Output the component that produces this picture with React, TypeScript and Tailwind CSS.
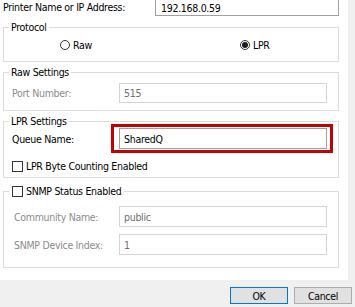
import React from "react";

function Radio({ checked }: { checked?: boolean }) {
  return (
    <span className="w-[10px] h-[10px] rounded-full border border-[#333333] bg-white flex items-center justify-center shrink-0">
      {checked && <span className="w-[6px] h-[6px] rounded-full bg-[#1a1a1a]" />}
    </span>
  );
}

function Check() {
  return <span className="w-[11px] h-[11px] border border-[#333333] bg-white shrink-0" />;
}

function Group({
  label,
  className,
  children,
}: {
  label: React.ReactNode;
  className: string;
  children?: React.ReactNode;
}) {
  return (
    <div className={`relative ml-[3px] w-[336px] border border-[#dcdcdc] ${className}`}>
      <div className="absolute -top-[9px] left-[5px] bg-white px-[2px] leading-[16px] flex items-center">{label}</div>
      {children}
    </div>
  );
}

export default function App() {
  return (
    <div className="w-[355px] h-[307px] bg-[#f0f0f0] flex flex-col overflow-hidden font-['DejaVu_Sans_Condensed','Noto_Sans',sans-serif] text-[10.5px] tracking-[-0.3px] leading-[16px] text-black whitespace-nowrap">
      <div className="w-[348px] h-[280px] bg-white overflow-hidden shrink-0">
        <div className="-mt-[4px] flex flex-col">
          <div className="flex items-center h-[20px]">
            <span className="ml-[3px] mt-[2px]">Printer Name or IP Address:</span>
            <div className="ml-auto mr-[9px] w-[184px] h-[20px] border border-[#a0a0a0] flex items-center px-[5px]">
              <span className="mt-[3px]">192.168.0.59</span>
            </div>
          </div>

          <Group label={<span>Protocol</span>} className="mt-[11px] h-[35px]">
            <div className="flex items-center h-full">
              <label className="flex items-center gap-[3px] ml-[56px]">
                <Radio />
                <span>Raw</span>
              </label>
              <label className="flex items-center gap-[3px] ml-[148px]">
                <Radio checked />
                <span>LPR</span>
              </label>
            </div>
          </Group>

          <Group label={<span>Raw Settings</span>} className="mt-[10px] h-[39px]">
            <div className="flex items-center mt-[10px]">
              <span className="ml-[8px] w-[107px] text-[#8c8c8c]">Port Number:</span>
              <div className="w-[208px] h-[20px] border border-[#d4d4d4] flex items-center px-[4px] text-[#6d6d6d]">515</div>
            </div>
          </Group>

          <Group label={<span>LPR Settings</span>} className="mt-[10px] h-[57px]">
            <div className="flex items-center mt-[6px]">
              <span className="ml-[8px] w-[107px]">Queue Name:</span>
              <div className="relative w-[208px] h-[21px]">
                <div className="w-full h-full border border-[#a0a0a0] flex items-center px-[4px]">SharedQ</div>
                <div className="absolute -left-[8px] -top-[4px] -right-[6px] -bottom-[4px] border-[3px] border-[#c40000]" />
              </div>
            </div>
            <label className="flex items-center gap-[3px] ml-[8px] mt-[9px]">
              <Check />
              <span>LPR Byte Counting Enabled</span>
            </label>
          </Group>

          <Group
            label={
              <span className="flex items-center gap-[3px] ml-[1px]">
                <Check />
                <span>SNMP Status Enabled</span>
              </span>
            }
            className="mt-[13px] h-[77px]"
          >
            <div className="flex items-center mt-[14px]">
              <span className="ml-[10px] w-[105px] text-[#8c8c8c]">Community Name:</span>
              <div className="w-[208px] h-[21px] border border-[#d4d4d4] flex items-center px-[4px] text-[#6d6d6d]">public</div>
            </div>
            <div className="flex items-center mt-[7px]">
              <span className="ml-[10px] w-[105px] text-[#8c8c8c]">SNMP Device Index:</span>
              <div className="w-[208px] h-[21px] border border-[#d4d4d4] flex items-center px-[4px] text-[#6d6d6d]">1</div>
            </div>
          </Group>
        </div>
      </div>
      <div className="flex justify-end gap-[6px] pr-[3px] pt-[7px]">
        <button className="w-[58px] h-[17px] border border-[#0078d7] bg-[#e1e1e1] flex items-center justify-center">OK</button>
        <button className="w-[58px] h-[17px] border border-[#adadad] bg-[#e1e1e1] flex items-center justify-center">Cancel</button>
      </div>
    </div>
  );
}
